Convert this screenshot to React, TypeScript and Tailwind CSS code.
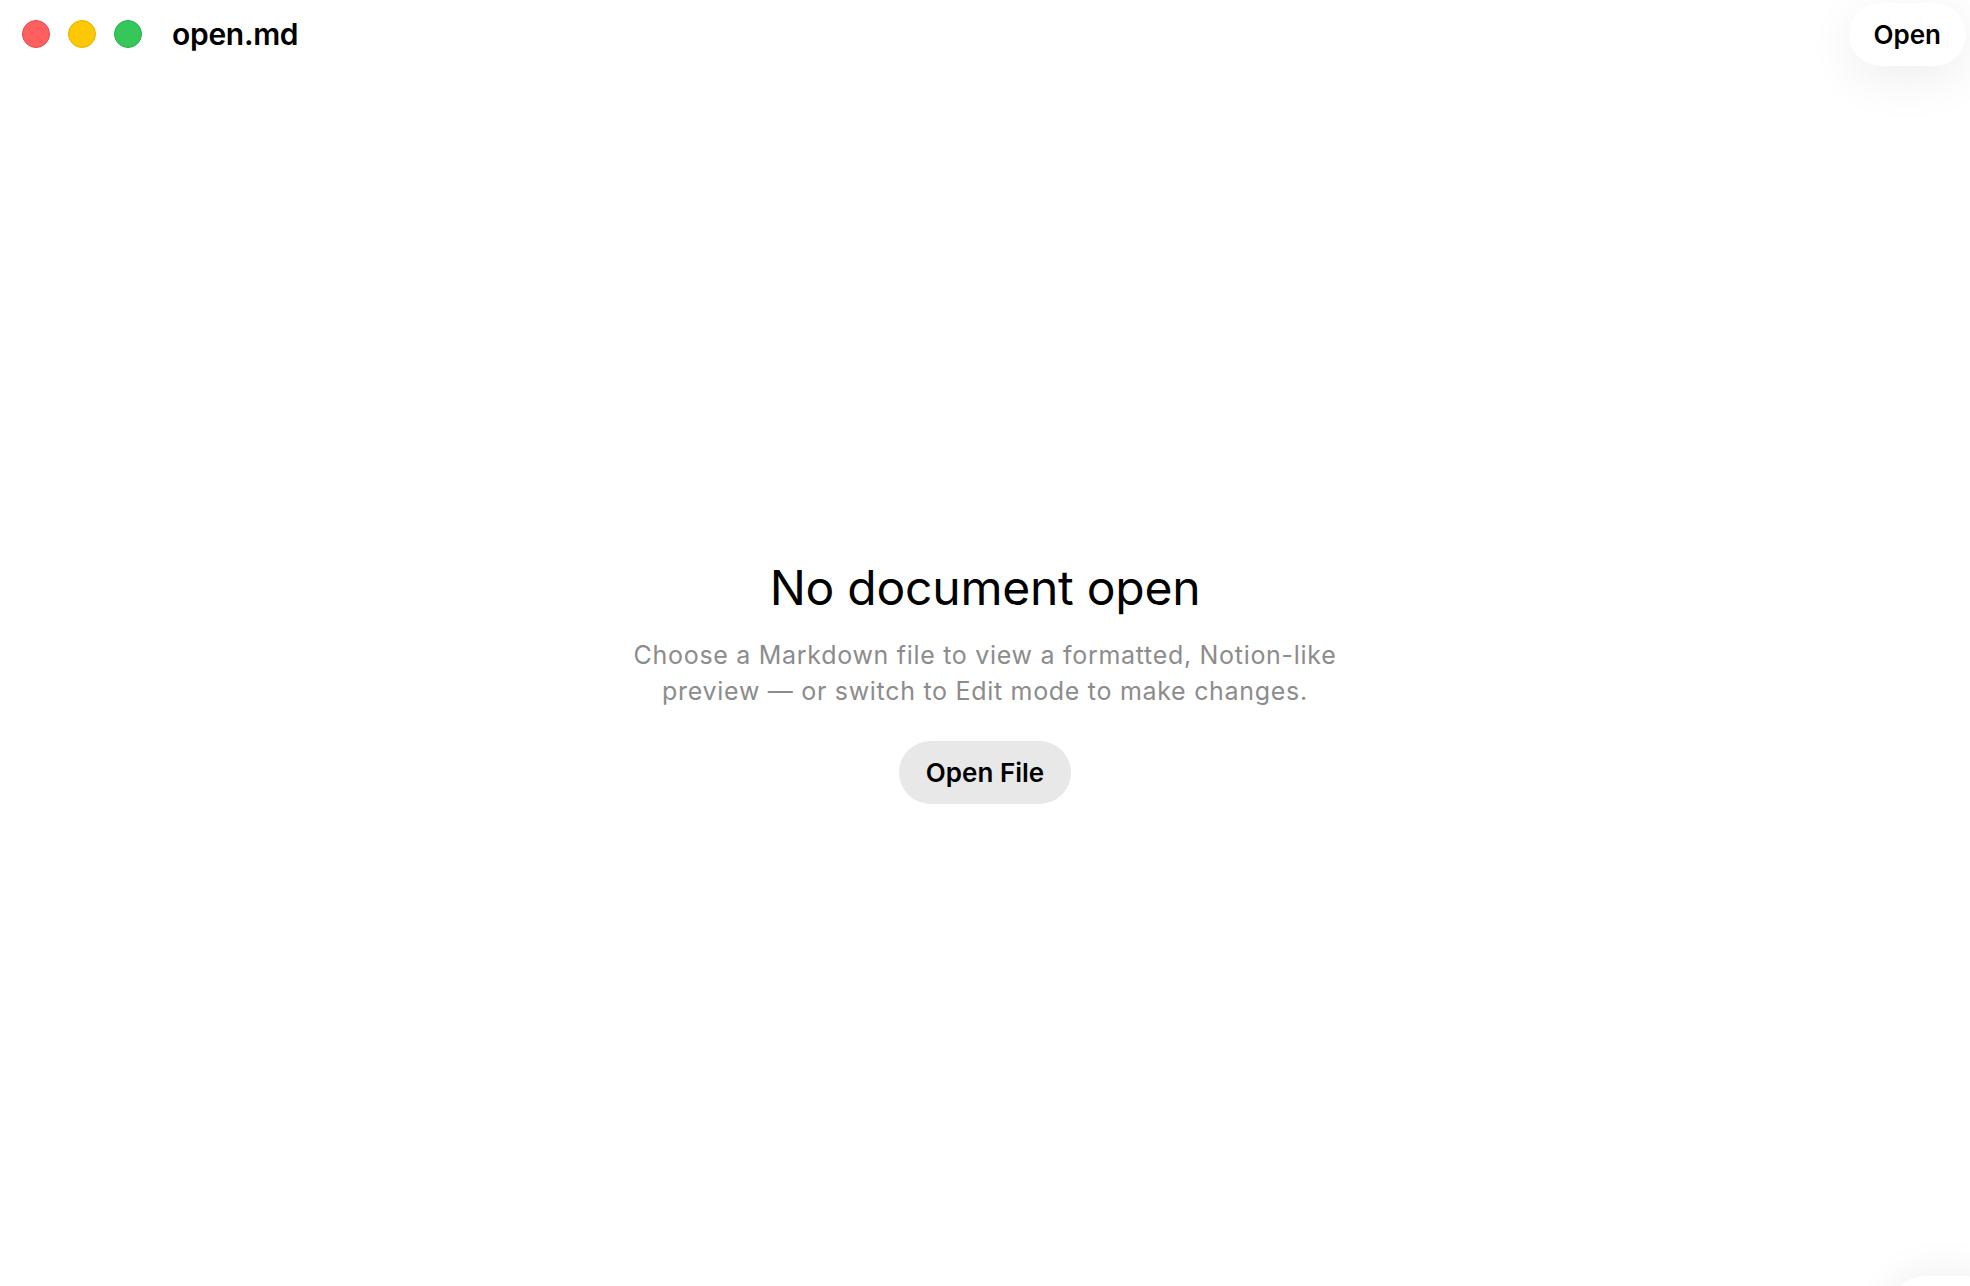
const FONT = { fontFamily: 'Inter, "Noto Sans", "Liberation Sans", sans-serif' };

function TrafficLights() {
  return (
    <div className="flex items-center gap-[18px]">
      <span className="h-[28px] w-[28px] rounded-full border border-[#e5484d] bg-[#ff5f5f]" />
      <span className="h-[28px] w-[28px] rounded-full border border-[#e8b400] bg-[#fbc803]" />
      <span className="h-[28px] w-[28px] rounded-full border border-[#22b04b] bg-[#35c759]" />
    </div>
  );
}

export default function App() {
  return (
    <div className="relative flex h-[1286px] flex-col overflow-hidden bg-white text-black" style={FONT}>
      <header className="flex h-[68px] items-center justify-between pl-[22px] pr-[4px]">
        <div className="flex items-center gap-[30px]">
          <TrafficLights />
          <span className="text-[30px] font-semibold tracking-[-0.01em]">open.md</span>
        </div>
        <button className="flex h-[63px] items-center rounded-full bg-white px-[25px] text-[26px] font-semibold shadow-[0_12px_50px_rgba(0,0,0,0.07)]">
          Open
        </button>
      </header>

      <main className="flex flex-1 flex-col items-center justify-center pt-[9px] text-center">
        <h1 className="text-[48px] leading-[58px] font-normal tracking-[-0.005em]">No document open</h1>
        <p className="mt-[20px] max-w-[740px] text-[25px] leading-[36px] tracking-[0.028em] text-[#8c8c8c]">
          Choose a Markdown file to view a formatted, Notion-like preview — or switch to Edit mode to make changes.
        </p>
        <button className="mt-[32px] flex h-[63px] items-center rounded-full bg-[#e8e8e8] px-[27px] text-[26px] font-semibold">
          Open File
        </button>
      </main>

      <div className="absolute -bottom-[60px] -right-[30px] h-[70px] w-[110px] rounded-full bg-white shadow-[0_0_40px_rgba(0,0,0,0.08)]" />
    </div>
  );
}
